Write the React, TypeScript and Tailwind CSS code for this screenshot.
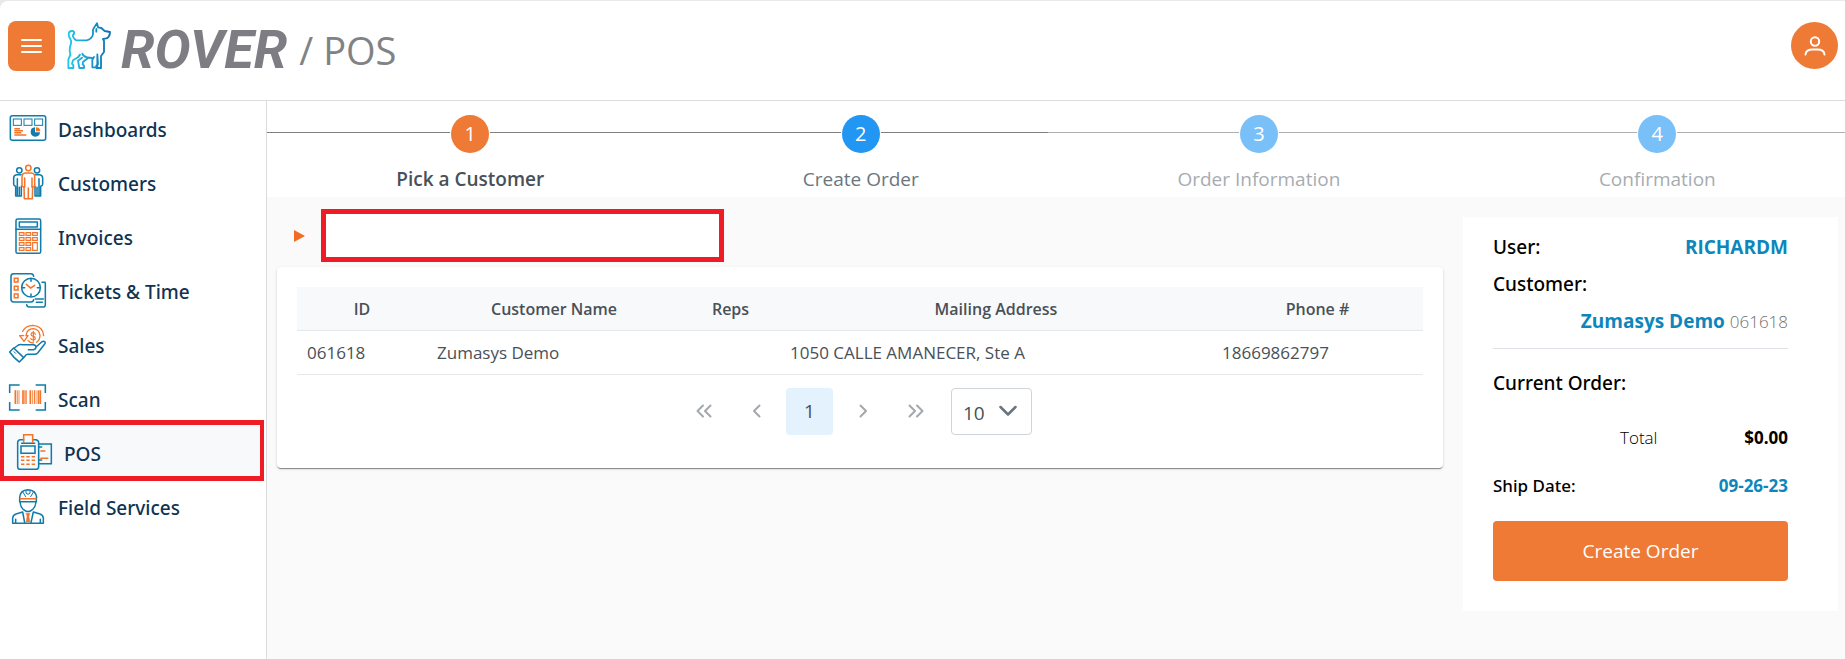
import type { ReactNode } from "react";

const BLUE = "#0f7cab";
const ORANGE = "#f47429";

function Icon({ box, children }: { box: string; children: ReactNode }) {
  return (
    <svg
      viewBox={box}
      className="size-10 shrink-0 overflow-visible"
      fill="none"
      stroke={BLUE}
      strokeWidth="4.6"
      strokeLinecap="round"
      strokeLinejoin="round"
      aria-hidden="true"
    >
      {children}
    </svg>
  );
}

function DashboardIcon() {
  return (
    <Icon box="24 30 120 120">
      <rect x="31" y="47" width="106" height="74" rx="6" />
      <g strokeWidth="3" strokeLinejoin="miter">
        <rect x="40" y="57" width="24" height="19" />
        <rect x="72" y="57" width="24" height="19" />
        <rect x="104" y="57" width="24" height="19" />
      </g>
      <path d="M43 86h17M43 92h26M43 98h21M43 105h36" stroke={ORANGE} strokeLinecap="butt" />
      <path d="M105 82a14 14 0 1 0 15 15h-15z" fill={BLUE} stroke="none" />
      <path d="M108 82a13 13 0 0 1 13 12h-13z" fill={ORANGE} stroke="none" />
    </Icon>
  );
}

function CustomersIcon() {
  return (
    <Icon box="24 192 120 120">
      <circle cx="58" cy="211" r="8" />
      <circle cx="111" cy="211" r="8" />
      <path d="M63 224H50q-9 1-9 10v19q0 5 6 6v29h17v-29M52 236v50M58 262v24" />
      <path d="M106 224h13q9 1 9 10v19q0 5-6 6v29h-17v-29M117 236v50M111 262v24" />
      <g stroke={ORANGE}>
        <circle cx="85" cy="204" r="8" />
        <path d="M76 219h18q10 1 10 11v26q0 5-6 5l-1 35H73l-1-35q-6 0-6-5v-26q0-10 10-11zM74 234v28M96 234v28M85 264v32" fill="#fff" />
      </g>
    </Icon>
  );
}

function InvoicesIcon() {
  return (
    <Icon box="24 354 120 120">
      <rect x="48" y="357" width="74" height="103" rx="5" />
      <path d="M48 388h74" />
      <rect x="58" y="366" width="54" height="15" />
      <g stroke={ORANGE} strokeWidth="3.5" strokeLinejoin="miter">
        <path d="M58 398h14v8H58zM78 398h14v8H78zM98 398h14v8H98z" />
        <path d="M58 413h14v8H58zM78 413h14v8H78zM98 413h14v8H98z" />
        <path d="M58 428h14v8H58zM78 428h14v8H78zM98 428h14v23H98z" />
        <path d="M58 443h14v8H58zM78 443h14v8H78z" />
      </g>
    </Icon>
  );
}

function TicketsIcon() {
  return (
    <Icon box="24 516 120 120">
      <path d="M101 529q-1-8-8-8H41q-8 0-8 8v69q0 8 8 8h52q7 0 8-7" />
      <path d="M126 547h9q1 0 1 3v64q0 7-7 7H88q-7 0-8-7M106 597h24M109 607h18" />
      <circle cx="93" cy="563" r="28" fill="#fff" />
      <path d="M93 538v6M93 582v6M68 563h6M112 563h6" />
      <g stroke={ORANGE} strokeLinejoin="miter">
        <path d="M43 535h11v11H43zM43 559h11v11H43zM43 582h11v11H43z" />
        <path d="M79 553l13 11 12-8" />
      </g>
    </Icon>
  );
}

function SalesIcon() {
  return (
    <Icon box="24 48 120 120">
      <path d="M29 126l12-12 30 29-13 13q-16-11-29-30z" />
      <path d="M43 114l12-9q6-3 12-1h33q8 1 8 7t-8 8H85M108 111l17-15q6-4 10 0 2 3-1 6l-21 27q-4 4-9 4H83q-5 0-10 8" />
      <path d="M42 125l5 5" strokeWidth="3" />
      <g stroke={ORANGE} strokeWidth="4">
        <path d="M68 64q8-17 31-18 29 2 32 31" />
        <path d="M71 77H59l13 17 12-17h-6q2-20 22-21 18 2 20 20 0 13-10 21" />
        <path d="M106 73q-1-5-7-5-6 0-6 5t7 6q6 1 6 6t-6 5q-7 0-8-5M100 64v30" strokeWidth="3.5" />
        <path d="M84 92q6 7 16 7" />
      </g>
    </Icon>
  );
}

function ScanIcon() {
  return (
    <Icon box="24 210 120 120">
      <path
        d="M29 249v-24h30M107 225h29v24M136 276v24h-29M59 300H29v-24"
        strokeLinecap="butt"
        strokeLinejoin="miter"
      />
      <g stroke={ORANGE} strokeLinecap="butt">
        <path d="M46 241v41M69 241v41M91 241v41M121 241v41" strokeWidth="5" />
        <path d="M52 241v41M57 241v41M79 241v41M98 241v41M111 241v41" strokeWidth="2.500" />
        <path d="M75 241v41M104 241v41M116 241v41" strokeWidth="3.500" />
      </g>
    </Icon>
  );
}

function PosIcon() {
  return (
    <Icon box="42 372 120 120">
      <path d="M71 389H60q-7 1-7 9v72q0 8 8 8h46q9 0 9-8v-72q0-8-8-9h-9" />
      <path d="M65 400h39M63 408h42v22H63z" strokeLinejoin="miter" />
      <path d="M117 402h37v59h-37M117 411h8M117 450h8" strokeLinejoin="miter" />
      <g stroke={ORANGE} strokeLinecap="butt" strokeLinejoin="miter">
        <path d="M71 399v-25h27v25" />
        <path d="M121 423h15M121 445h24" />
        <path d="M63 440h10M79 440h10M95 440h10M63 451h10M79 451h10M95 451h10M63 463h10M79 463h10M95 463h10" />
      </g>
    </Icon>
  );
}

function FieldIcon() {
  return (
    <Icon box="24 534 120 120">
      <path d="M59 563q1-23 25-24 24 1 26 24M59 563v12h50v-12M60 576q2 20 17 27 7 3 14 0 15-8 17-27" />
      <path d="M68 545l9 15M101 545l-9 15M78 541v9q6 6 12 0v-9" strokeWidth="3" />
      <path d="M61 566h47" stroke={ORANGE} />
      <path d="M68 606l-20 6q-9 3-10 12v16h92v-16q-1-9-10-12l-20-6M68 606l6 32M100 606l-7 32M47 628v11M121 628v11" />
      <path d="M78 610h12l-3 9 3 17H78l3-17z" fill={ORANGE} stroke={ORANGE} strokeWidth="1" />
    </Icon>
  );
}

function DogLogo() {
  return (
    <svg
      viewBox="180 45 132 141"
      className="h-[47px] w-11 shrink-0 overflow-visible"
      fill="none"
      stroke="url(#dog)"
      strokeWidth="5.500"
      strokeLinecap="round"
      strokeLinejoin="round"
      aria-hidden="true"
    >
      <defs>
        <linearGradient id="dog" gradientUnits="userSpaceOnUse" x1="184" y1="0" x2="310" y2="0">
          <stop offset="0" stopColor="#22c7ec" />
          <stop offset="1" stopColor="#0f6db0" />
        </linearGradient>
      </defs>
      <path d="M201 80q2-8-6-8-10 0-10 10 0 7 5 14 4 6 2 14-4 10-4 20l2 14-6 13v26h15v-8l-4-5 3-10 15-9 6-8" />
      <path d="M201 80q-5 3-3 9 4 9 10 11h31q8-1 13-7 6-6 6-12V68q4-8 12-19l3 12 10 2 10 9 16 3q0 9-4 14-3 6-11 6l-6 1 3 6v33l-9 12v36h-14v-7l5-5-2-29M261 150l-5 8v23h15v-34" />
      <path d="M226 140q4 10 14 11l15 2M225 152l-12 9 4 22h14v-7l-4-4 1-7 14-11M268 74v-8" />
    </svg>
  );
}

const navItems = [
  { label: "Dashboards", icon: <DashboardIcon /> },
  { label: "Customers", icon: <CustomersIcon /> },
  { label: "Invoices", icon: <InvoicesIcon /> },
  { label: "Tickets & Time", icon: <TicketsIcon /> },
  { label: "Sales", icon: <SalesIcon /> },
  { label: "Scan", icon: <ScanIcon /> },
  { label: "POS", icon: <PosIcon />, active: true },
  { label: "Field Services", icon: <FieldIcon /> },
];

const steps = [
  { label: "Pick a Customer", circle: "bg-[#ee7a35]", text: "font-semibold text-[#495057]", line: "before:bg-[#808080]" },
  { label: "Create Order", circle: "bg-[#2196f3]", text: "text-[#6c757d]", line: "before:bg-[#808080]" },
  { label: "Order Information", circle: "bg-[#7ac0f8]", text: "text-[#a7acb1]", line: "before:bg-[#b0b0b0]" },
  { label: "Confirmation", circle: "bg-[#7ac0f8]", text: "text-[#a7acb1]", line: "before:bg-[#b0b0b0]" },
];

function Header() {
  return (
    <div className="bg-[#e9e9e9] pt-px">
      <header className="flex h-[100px] items-center rounded-tl-lg border-b border-[#dcdcdc] bg-white pr-[7px] pl-2 pb-2.5">
        <button type="button" aria-label="Menu" className="flex h-[50px] w-[47px] items-center justify-center rounded-lg bg-[#ee7a35]">
          <svg viewBox="0 0 21 14" className="h-3.5 w-[21px]" stroke="#fff" strokeWidth="2" strokeLinecap="round" aria-hidden="true">
            <path d="M1 1h19M1 7h19M1 13h19" />
          </svg>
        </button>
        <a href="#home" aria-label="Rover" className="ml-3 flex items-center gap-2.5">
          <DogLogo />
          <span className="pt-2 font-[Roboto] text-[54px] leading-none font-bold text-[#7d7d83] italic">ROVER</span>
        </a>
        <h1 className="ml-3 pt-2 text-[38px] leading-none font-normal text-[#808386]">/ POS</h1>
        <button type="button" aria-label="Account" className="ml-auto flex size-[47px] items-center justify-center rounded-full bg-[#ee7a35]">
          <svg viewBox="0 0 22 20" className="h-5 w-[22px]" fill="none" stroke="#fff" strokeWidth="2" strokeLinecap="round" aria-hidden="true">
            <circle cx="11" cy="5.500" r="4.200" />
            <path d="M1.500 18.500q.5-5 7-5h5q6.500 0 7 5" />
          </svg>
        </button>
      </header>
    </div>
  );
}

function Sidebar() {
  return (
    <nav aria-label="Main" className="w-[267px] shrink-0 border-r border-[#dcdcdc] bg-white pt-0.5 font-['Noto_Sans',sans-serif] text-[19px] font-medium text-[#0f3352]">
      <ul>
        {navItems.map((item) => (
          <li key={item.label}>
            <a
              href={"#" + item.label}
              className={
                item.active
                  ? "relative -mt-[7px] mr-0.5 flex h-[61px] items-center gap-2.5 border-x-4 border-y-5 border-[#ee1c25] bg-[#f8f9fb] pt-[7px] pl-2.5"
                  : "flex h-[54px] items-center gap-2.5 pl-2"
              }
            >
              {item.icon}
              {item.label}
            </a>
          </li>
        ))}
      </ul>
    </nav>
  );
}

function Stepper() {
  return (
    <ol className="flex h-24 bg-white">
      {steps.map((step, i) => (
        <li
          key={step.label}
          className={
            "relative flex flex-auto flex-col items-center pt-3.5 before:absolute before:inset-x-0 before:top-[31px] before:h-px " + step.line
          }
        >
          <span
            className={
              "relative flex size-[38px] items-center justify-center rounded-full text-xl text-white ring-1 ring-white " + step.circle
            }
          >
            {i + 1}
          </span>
          <span className={"mt-3 text-[19px] leading-7 " + step.text}>{step.label}</span>
        </li>
      ))}
    </ol>
  );
}

function PageButton({ label, path }: { label: string; path: string }) {
  return (
    <button type="button" aria-label={label} className="flex size-[47px] items-center justify-center">
      <svg viewBox="0 0 18 14" className="h-3.5 w-[18px]" fill="none" stroke="#a3a8ad" strokeWidth="2" strokeLinecap="round" strokeLinejoin="round" aria-hidden="true">
        <path d={path} />
      </svg>
    </button>
  );
}

const headCell = "px-2.5 pt-0.5 text-center text-base font-semibold";
const bodyCell = "px-2.5 pt-0.5";

function CustomerTable() {
  return (
    <section className="h-[201px] rounded bg-white px-5 pt-5 text-[17px] leading-6 text-[#495057] shadow-[0_2px_1px_-1px_rgba(0,0,0,0.3),0_1px_1px_rgba(0,0,0,0.16),0_1px_3px_rgba(0,0,0,0.14)]">
      <table className="w-full table-fixed border-collapse">
        <colgroup>
          <col className="w-[130px]" />
          <col className="w-[254px]" />
          <col className="w-[99px]" />
          <col className="w-[432px]" />
          <col className="w-[211px]" />
        </colgroup>
        <thead>
          <tr className="h-[43px] border-b border-[#e2e8ee] bg-[#f8f9fb]">
            <th className={headCell}>ID</th>
            <th className={headCell}>Customer Name</th>
            <th className={headCell}>Reps</th>
            <th className={headCell}>Mailing Address</th>
            <th className={headCell}>Phone #</th>
          </tr>
        </thead>
        <tbody>
          <tr className="h-11 border-b border-[#e6e9ec]">
            <td className={bodyCell}>061618</td>
            <td className={bodyCell}>Zumasys Demo</td>
            <td className={bodyCell} />
            <td className={bodyCell}>1050 CALLE AMANECER, Ste A</td>
            <td className={bodyCell}>18669862797</td>
          </tr>
        </tbody>
      </table>
      <div className="mt-[13px] flex justify-center gap-1.5">
        <PageButton label="First page" path="M8 1.500L2.500 7 8 12.500M15.500 1.500L10 7l5.500 5.500" />
        <PageButton label="Previous page" path="M11.500 1.500L6 7l5.500 5.500" />
        <button type="button" className="size-[47px] rounded bg-[#e3f2fd] text-[19px]">1</button>
        <PageButton label="Next page" path="M6.500 1.500L12 7l-5.500 5.500" />
        <PageButton label="Last page" path="M2.500 1.500L8 7l-5.500 5.500M10 1.500L15.500 7 10 12.500" />
        <div className="relative mr-2 ml-1.5">
          <select aria-label="Rows per page" className="h-[47px] w-[81px] appearance-none rounded border border-[#ced4da] bg-white pt-1 pl-[11px] text-[19px]" defaultValue="10">
            <option>10</option>
            <option>20</option>
            <option>50</option>
          </select>
          <svg viewBox="0 0 18 12" className="pointer-events-none absolute top-[17px] right-[15px] h-3 w-[18px]" fill="none" stroke="#6c757d" strokeWidth="2.500" strokeLinecap="round" strokeLinejoin="round" aria-hidden="true">
            <path d="M1.500 2L9 9.500 16.500 2" />
          </svg>
        </div>
      </div>
    </section>
  );
}

const panelLabel = "font-['Noto_Sans',sans-serif] font-medium";

function OrderPanel() {
  return (
    <aside className="h-[394px] w-[375px] shrink-0 bg-white pt-3 pr-[50px] pl-[30px] text-black">
      <dl className="text-[19px] leading-[37px]">
        <div className="flex justify-between">
          <dt className={panelLabel}>User:</dt>
          <dd className="font-bold text-[#0d86bb]">RICHARDM</dd>
        </div>
        <dt className={panelLabel}>Customer:</dt>
        <dd className="text-right font-bold text-[#0d86bb]">
          Zumasys Demo <span className="text-[17px] font-light text-[#6f6f6f]">061618</span>
        </dd>
      </dl>
      <hr className="mt-2 border-[#dee2e6]" />
      <h2 className={"mt-4 text-[19px] leading-[37px] " + panelLabel}>Current Order:</h2>
      <dl className="text-[17px] leading-6">
        <div className="mt-6 flex justify-between pl-[127px]">
          <dt className="font-light">Total</dt>
          <dd className="font-bold">$0.00</dd>
        </div>
        <div className="mt-6 flex justify-between">
          <dt className={panelLabel}>Ship Date:</dt>
          <dd className="font-bold text-[#0d86bb]">09-26-23</dd>
        </div>
      </dl>
      <button type="button" className="mt-[23px] h-[60px] w-full rounded-sm bg-[#ee7a35] text-[19px] text-white">
        Create Order
      </button>
    </aside>
  );
}

export default function App() {
  return (
    <div className="flex min-h-screen flex-col bg-[#fafafa] font-['Open_Sans',sans-serif]">
      <Header />
      <div className="flex flex-1">
        <Sidebar />
        <main className="min-w-0 flex-1">
          <Stepper />
          <div className="flex items-start pr-[7px] pl-2.5">
            <div className="min-w-0 flex-1 pt-3">
              <div className="mb-[5px] flex items-center pl-[17px]">
                <button type="button" aria-label="Expand" className="mr-4 flex h-6 w-[11px] items-center">
                  <svg viewBox="0 0 11 12" className="h-3 w-[11px]" aria-hidden="true">
                    <path d="M0 0l11 6-11 6z" fill="#f36c23" />
                  </svg>
                </button>
                <input aria-label="Customer search" type="text" className="h-[53px] w-[403px] border-5 border-[#ee1c25] bg-white px-3" />
              </div>
              <CustomerTable />
            </div>
            <div className="ml-5 pt-5">
              <OrderPanel />
            </div>
          </div>
        </main>
      </div>
    </div>
  );
}
